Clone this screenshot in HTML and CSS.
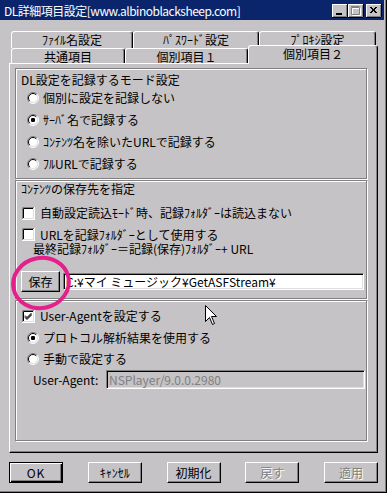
FILE: index.html
```html
<!DOCTYPE html>
<html lang="ja">
<head>
<meta charset="utf-8">
<title>DL詳細項目設定</title>
<link rel="stylesheet" href="styles.css">
</head>
<body>
<svg class="defs" width="0" height="0" aria-hidden="true">
  <defs>
    <symbol id="radio" viewBox="0 0 12 12">
      <circle cx="6" cy="6" r="5" fill="#fff"/>
      <path d="M2.1 9.9A5.5 5.5 0 0 1 9.9 2.1" stroke="#808080" fill="none"/>
      <path d="M9.9 2.1A5.5 5.5 0 0 1 2.1 9.9" stroke="#fff" fill="none"/>
      <path d="M2.8 9.2A4.5 4.5 0 0 1 9.2 2.8" stroke="#000" fill="none"/>
      <path d="M9.2 2.8A4.5 4.5 0 0 1 2.8 9.2" stroke="#dfdfdf" fill="none"/>
    </symbol>
    <symbol id="radio-on" viewBox="0 0 12 12">
      <use href="#radio"/>
      <rect x="4" y="4" width="4" height="4" rx="1.2" fill="#000"/>
    </symbol>
    <symbol id="check" viewBox="0 0 13 13">
      <rect width="13" height="13" fill="#fff"/>
      <path d="M0.5 12V0.5H12" stroke="#808080" fill="none"/>
      <path d="M1.5 11V1.5H11" stroke="#000" fill="none"/>
      <path d="M0 12.5H12.5V0" stroke="#fff" fill="none"/>
      <path d="M1 11.5H11.5V1" stroke="#dfdfdf" fill="none"/>
    </symbol>
    <symbol id="check-on" viewBox="0 0 13 13">
      <use href="#check"/>
      <path d="M3 5.5L5 7.5L9.5 3M3 6.5L5 8.5L9.5 4M3 7.5L5 9.5L9.5 5" stroke="#000" fill="none"/>
    </symbol>
    <symbol id="tbtn" viewBox="0 0 16 14">
      <rect width="16" height="14" fill="#c6c3c6"/>
      <path d="M0 13.5H15.5V0" stroke="#000" fill="none"/>
      <path d="M0.5 13V0.5H15" stroke="#fff" fill="none"/>
      <path d="M1 12.5H14.5V1" stroke="#808080" fill="none"/>
    </symbol>
  </defs>
</svg>

<div class="window">
  <div class="titlebar">
    <span class="title">DL詳細項目設定[www.albinoblacksheep.com]</span>
    <div class="tbtns">
      <svg class="tbtn" width="16" height="14" viewBox="0 0 16 14"><use href="#tbtn"/><rect x="4" y="9" width="6" height="2" fill="#000"/></svg>
      <svg class="tbtn" width="16" height="14" viewBox="0 0 16 14"><use href="#tbtn"/><path d="M4.5 4.5H12.5V11.5H4.5Z M4 3.5H12" stroke="#fff" fill="none"/><path d="M3.5 3.5H11.5V10.5H3.5Z M3 2.5H11.5" stroke="#808080" fill="none"/></svg>
      <svg class="tbtn close" width="16" height="14" viewBox="0 0 16 14"><use href="#tbtn"/><path d="M4 3L10 9M5 3L11 9M10 3L4 9M11 3L5 9" stroke="#000" fill="none"/></svg>
    </div>
  </div>

  <div class="client">
    <div class="tabrow row1">
      <div class="tab t1">ﾌｧｲﾙ名設定</div>
      <div class="tab t2">ﾊﾟｽﾜｰﾄﾞ設定</div>
      <div class="tab t3">ﾌﾟﾛｷｼ設定</div>
    </div>
    <div class="tabrow row2">
      <div class="tab u1">共通項目</div>
      <div class="tab u2">個別項目１</div>
      <div class="tab u3 active">個別項目２</div>
    </div>

    <div class="panel">
      <div class="frame f1">
        <div class="flabel">DL設定を記録するモード設定</div>
        <div class="opt radio-opt"><svg class="ico-r" width="12" height="12"><use href="#radio"/></svg><span>個別に設定を記録しない</span></div>
        <div class="opt radio-opt"><svg class="ico-r" width="12" height="12"><use href="#radio-on"/></svg><span>ｻｰﾊﾞ名で記録する</span></div>
        <div class="opt radio-opt"><svg class="ico-r" width="12" height="12"><use href="#radio"/></svg><span>ｺﾝﾃﾝﾂ名を除いたURLで記録する</span></div>
        <div class="opt radio-opt"><svg class="ico-r" width="12" height="12"><use href="#radio"/></svg><span>ﾌﾙURLで記録する</span></div>
      </div>

      <div class="frame f2">
        <div class="flabel">ｺﾝﾃﾝﾂの保存先を指定</div>
        <div class="opt chk-opt first"><svg class="ico-c" width="13" height="13"><use href="#check"/></svg><span>自動設定読込ﾓｰﾄﾞ時、記録ﾌｫﾙﾀﾞｰは読込まない</span></div>
        <div class="chk2">
          <div class="opt chk-opt line"><svg class="ico-c" width="13" height="13"><use href="#check"/></svg><span>URLを記録ﾌｫﾙﾀﾞｰとして使用する</span></div>
          <div class="sub">最終記録ﾌｫﾙﾀﾞｰ＝記録(保存)ﾌｫﾙﾀﾞｰ+ URL</div>
        </div>
        <div class="saverow">
          <div class="btn save">保存</div>
          <div class="field">C:¥マイ ミュージック¥GetASFStream¥</div>
        </div>
      </div>

      <div class="frame f3">
        <div class="opt chk-opt"><svg class="ico-c" width="13" height="13"><use href="#check-on"/></svg><span>User-Agentを設定する</span></div>
        <div class="opt radio-opt"><svg class="ico-r" width="12" height="12"><use href="#radio-on"/></svg><span>プロトコル解析結果を使用する</span></div>
        <div class="opt radio-opt short"><svg class="ico-r" width="12" height="12"><use href="#radio"/></svg><span>手動で設定する</span></div>
        <div class="uarow">
          <span class="ualabel">User-Agent:</span>
          <div class="field disabled">NSPlayer/9.0.0.2980</div>
        </div>
      </div>
    </div>

    <div class="buttons">
      <div class="btn default">OK</div>
      <div class="btn">ｷｬﾝｾﾙ</div>
      <div class="btn">初期化</div>
      <div class="btn off">戻す</div>
      <div class="btn off">適用</div>
    </div>
  </div>

  <svg class="mark" width="70" height="62" viewBox="0 0 70 62">
    <ellipse cx="33" cy="31" rx="28" ry="25" transform="rotate(-12 33 31)" fill="none" stroke="#e4208c" stroke-width="4"/>
  </svg>
  <svg class="cursor" width="13" height="21" viewBox="0 0 13 21">
    <path d="M0.5 0.5V16.5L4.5 12.5L7.5 19.5L9.5 18.5L6.5 11.5H11.5Z" fill="#fff" stroke="#000" stroke-linejoin="miter"/>
  </svg>
</div>
</body>
</html>
```

FILE: styles.css
```css
* { box-sizing: border-box; }
html, body { margin: 0; padding: 0; }
body {
  width: 387px;
  height: 493px;
  overflow: hidden;
  background: #c6c3c6;
  font-family: "Noto Sans CJK JP", "Noto Sans", sans-serif;
  font-size: 12px;
  line-height: 14px;
  color: #000;
}
.defs { position: absolute; width: 0; height: 0; overflow: hidden; }

.window {
  position: relative;
  width: 387px;
  height: 493px;
  display: flex;
  flex-direction: column;
  border-right: 1px solid #000;
  border-bottom: 1px solid #000;
  box-shadow: inset -1px -1px 0 #808080;
}

/* title bar */
.titlebar {
  height: 20px;
  margin-right: 2px;
  background: #0a256c;
  display: flex;
  justify-content: space-between;
  align-items: flex-start;
  padding: 0 2px 0 4px;
}
.title {
  color: #fff;
  line-height: 21px;
  white-space: nowrap;
  letter-spacing: -0.5px;
}
.tbtns { display: flex; margin-top: 4px; }
.tbtn { display: block; }
.tbtn.close { margin-left: 2px; }

/* client */
.client {
  flex: 1;
  display: flex;
  flex-direction: column;
  padding: 11px 0 0 9px;
}
.tabrow { display: flex; margin-left: 2px; align-items: flex-start; }
.row1 { height: 17px; }
.row2 { height: 15px; }
.tab {
  height: 100%;
  display: flex;
  align-items: center;
  justify-content: center;
  border-style: solid;
  border-width: 1px 1px 0 1px;
  border-color: #fff #000 transparent #fff;
  box-shadow: inset -1px 0 0 #808080;
  border-radius: 3px 3px 0 0;
  background: #c6c3c6;
  white-space: nowrap;
  line-height: 13px;
}
.row1 .tab { padding-bottom: 2px; }
.t1 { width: 122px; }
.t2 { width: 126px; }
.t3 { width: 117px; }
.u1 { width: 114px; }
.u2 { width: 123px; }
.u3 { width: 130px; }
.tab.active {
  position: relative;
  z-index: 2;
  height: 19px;
  margin-top: -3px;
  padding-bottom: 3px;
}

.panel {
  width: 369px;
  height: 390px;
  border: 1px solid;
  border-color: #fff #000 #000 #fff;
  box-shadow: inset -1px -1px 0 #808080;
  padding: 4px 0 0 5px;
  display: flex;
  flex-direction: column;
}
.frame {
  width: 352px;
  border: 1px solid #808080;
  box-shadow: inset 1px 1px 0 #fff, 1px 1px 0 #fff;
  display: flex;
  flex-direction: column;
}
.f1 { height: 111px; padding-top: 3px; }
.f2 { height: 119px; margin-top: 1px; }
.f3 { height: 141px; margin-top: 1px; padding-top: 4px; }

.flabel {
  height: 15px;
  line-height: 15px;
  padding-left: 5px;
  white-space: nowrap;
}
.opt {
  height: 22px;
  display: flex;
  align-items: center;
  white-space: nowrap;
}
.radio-opt { padding-left: 11px; gap: 4px; }
.radio-opt.short { height: 20px; }
.chk-opt { padding-left: 6px; gap: 5px; }
.chk-opt.first { margin-top: 6px; }
.ico-r, .ico-c { display: block; flex: none; }

.chk2 { margin-top: 3px; display: flex; flex-direction: column; }
.chk2 .opt { height: 14px; line-height: 13px; }
.sub { height: 14px; line-height: 13px; padding-top: 1px; padding-left: 17px; white-space: nowrap; }

.saverow {
  margin-top: 16px;
  height: 21px;
  display: flex;
  align-items: center;
  padding-left: 5px;
  gap: 3px;
}

.btn {
  width: 54px;
  height: 21px;
  display: flex;
  align-items: center;
  justify-content: center;
  border: 1px solid;
  border-color: #fff #000 #000 #fff;
  box-shadow: inset -1px -1px 0 #808080;
  white-space: nowrap;
}
.btn.save { width: 39px; }
.btn.default {
  border-color: #000;
  box-shadow: inset 1px 1px 0 #fff, inset -1px -1px 0 #000, inset -2px -2px 0 #808080;
  letter-spacing: 1px;
}
.btn.off { color: #808080; text-shadow: 1px 1px 0 #fff; }

.field {
  width: 301px;
  height: 17px;
  background: #fff;
  border: 1px solid;
  border-color: #808080 #fff #fff #808080;
  box-shadow: inset 1px 1px 0 #000, inset -1px -1px 0 #dfdfdf;
  padding: 0 0 0 2px;
  display: flex;
  align-items: center;
  white-space: nowrap;
  overflow: hidden;
}

.uarow {
  margin-top: 1px;
  height: 19px;
  display: flex;
  align-items: center;
  padding-left: 17px;
}
.ualabel { width: 73px; white-space: nowrap; }
.field.disabled {
  width: 259px;
  height: 19px;
  background: #c6c3c6;
  color: #808080;
}

.buttons {
  margin-top: 9px;
  width: 369px;
  height: 21px;
  display: flex;
  justify-content: space-between;
}

/* overlays */
.mark { position: absolute; left: 8px; top: 252px; }
.cursor { position: absolute; left: 205px; top: 305px; }
```
